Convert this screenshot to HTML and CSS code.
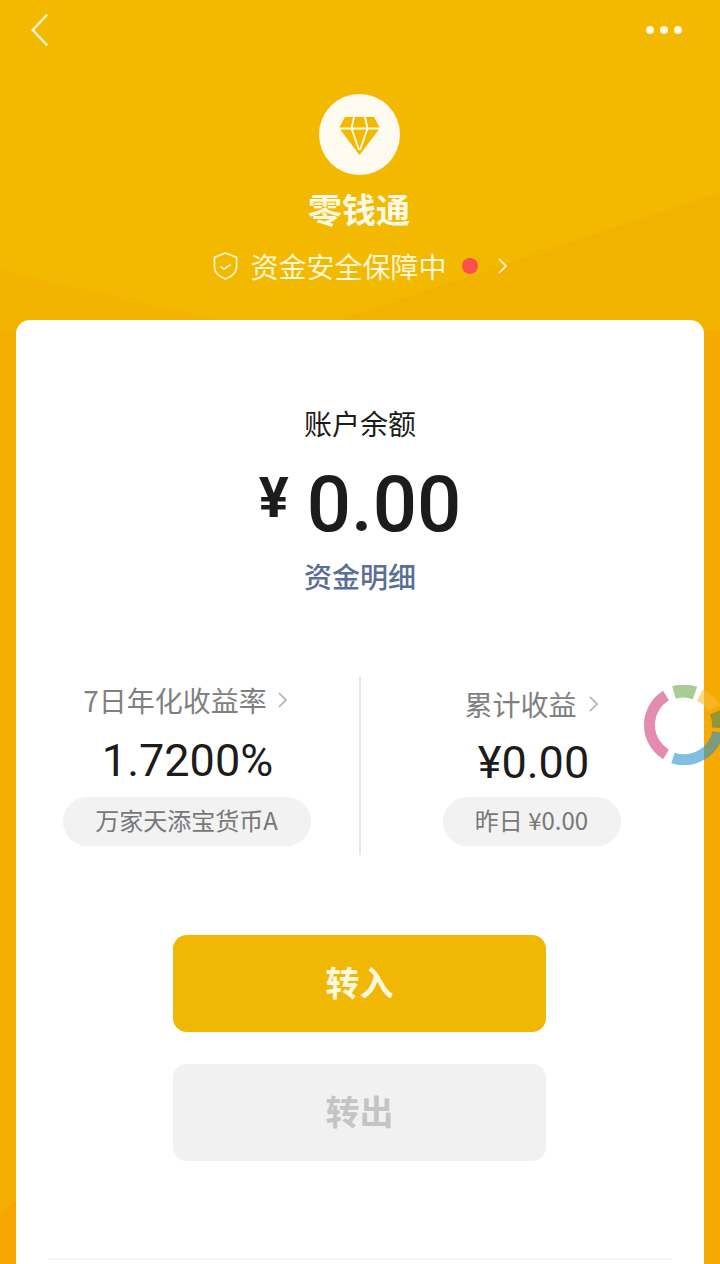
FILE: index.html
```html
<!DOCTYPE html>
<html lang="zh-CN">
<head>
  <meta charset="UTF-8" />
  <meta name="viewport" content="width=device-width,initial-scale=1.0" />
  <title>零钱通</title>
  <link rel="stylesheet" href="styles.css">
</head>
<body>
  <svg class="bg-shapes" viewBox="0 0 720 1264" aria-hidden="true">
    <polygon points="0,270 264,330 0,330" fill="#f2b400" />
    <polygon points="720,192 310,330 720,330" fill="#f1b300" />
    <polygon points="0,330 720,330 720,1264 0,1264" fill="#f3b000" />
    <polygon points="0,1215 16,1200 16,1264 0,1264" fill="#f7a600" />
    <polygon points="704,330 720,330 720,1264 704,1264" fill="#f6a900" />
  </svg>

  <div class="topbar">
    <svg class="back-icon" viewBox="0 0 22 38"><path d="M19 2 3 19l16 17" /></svg>
    <div class="more-dots"><i></i><i></i><i></i></div>
  </div>

  <header class="product">
    <div class="product-logo">
      <svg viewBox="0 0 41 38">
        <path class="gem" d="M6 0h29l6 11-20.500 27L0 11z" />
        <path class="gem-lines" d="M0 11.500h41M15 0l-2.500 11.500L20 33M26 0l2.500 11.500L21 33" />
      </svg>
    </div>
    <h1>零钱通</h1>
    <div class="safe-row">
      <svg class="shield" viewBox="0 0 26 30"><path d="M13 1.500 24.500 6v10c0 6-5 10-11.500 12.500C6.500 26 1.500 22 1.500 16V6z" /><path d="m7.500 15.500 4 2.500 7-4.500" /></svg>
      <span>资金安全保障中</span>
      <i class="red-dot"></i>
      <svg class="chev safe-chev" viewBox="0 0 12 20"><path d="m2 2 8 8-8 8" /></svg>
    </div>
  </header>

  <main class="card">
    <div class="balance-title">账户余额</div>
    <div class="balance"><span class="yen">¥</span>0.00</div>
    <a class="detail-link">资金明细</a>

    <section class="stats">
      <div class="stat">
        <div class="stat-label">7日年化收益率<svg class="chev" viewBox="0 0 12 20"><path d="m2 2 8 8-8 8" /></svg></div>
        <div class="stat-value">1.7200%</div>
        <div class="pill pill-wide">万家天添宝货币A</div>
      </div>
      <div class="stat stat-right">
        <div class="stat-label">累计收益<svg class="chev" viewBox="0 0 12 20"><path d="m2 2 8 8-8 8" /></svg></div>
        <div class="stat-value">¥0.00</div>
        <div class="pill pill-small">昨日 ¥0.00</div>
      </div>
    </section>

    <div class="actions">
      <button class="btn btn-in">转入</button>
      <button class="btn btn-out">转出</button>
    </div>
    <div class="bottom-line"></div>
  </main>

  <svg class="float-ring" viewBox="0 0 80 80" aria-hidden="true">
    <path class="ring-part" d="M23 10.500A34.600 34.600 0 0 0 23 69.500" stroke="#d2417b" />
    <path class="ring-part ring-thick" d="M31 7.500A34 34 0 0 1 52 8" stroke="#70ac4e" />
    <path class="ring-part ring-thick" d="M57 10A34 34 0 0 1 71 23" stroke="#f5c034" />
    <path class="ring-part ring-thick" d="M73 27A34.600 34.600 0 0 1 75.500 43" stroke="#4f8a5c" />
    <path class="ring-part" d="M30 73A34.800 34.800 0 0 0 75 47" stroke="#2a96d0" />
  </svg>
</body>
</html>
```

FILE: styles.css
```css
*{box-sizing:border-box;}
html,body{margin:0;height:1264px;overflow:hidden;}
body{
  position:relative;
  font-family:"Noto Sans CJK SC","Noto Sans",sans-serif;
  background:#f2b900;
  color:#1c1c1c;
}
.bg-shapes{position:absolute;left:0;top:0;width:720px;height:1264px;}

.topbar{
  position:relative;display:flex;justify-content:space-between;align-items:center;
  height:60px;padding:0 38px 0 30px;
}
.back-icon{width:20px;height:38px;fill:none;stroke:#fdf3cf;stroke-width:2.6;}
.more-dots{display:flex;gap:6px;}
.more-dots i{width:8px;height:8px;border-radius:50%;background:#fff8e6;}

.product{position:relative;display:flex;flex-direction:column;align-items:center;padding:34px 2px 0 0;height:260px;}
.product-logo{
  width:81px;height:81px;border-radius:50%;background:#fffbf0;
  display:flex;align-items:center;justify-content:center;
}
.product-logo svg{width:41px;height:38px;margin-top:3px;}
.gem{fill:#f2b900;}
.gem-lines{fill:none;stroke:#fffbf0;stroke-width:1.8;}
.product h1{margin:8px 0 0;font-size:34px;line-height:52px;font-weight:700;color:#fff9e8;}
.safe-row{display:flex;align-items:center;margin-top:11px;margin-left:3px;height:40px;font-size:28px;color:#fff6d8;}
.shield{width:25px;height:30px;margin-right:12px;fill:none;stroke:#fff3c8;stroke-width:1.8;}
.red-dot{width:16px;height:16px;border-radius:50%;background:#f9514f;margin:0 19px 0 15px;}
.chev{width:11px;height:18px;fill:none;stroke:#b9b9b9;stroke-width:2;}
.safe-chev{stroke:#fff3c8;}

.card{
  position:absolute;left:16px;top:320px;width:688px;height:960px;
  background:#fff;border-radius:14px;
  display:flex;flex-direction:column;align-items:center;
}
.balance-title{margin-top:83px;font-size:28px;line-height:40px;}
.balance{
  margin-top:17px;font-family:Roboto,sans-serif;font-weight:500;font-size:78px;line-height:90px;
  display:flex;align-items:center;
}
.yen{font-size:56px;font-weight:700;margin:-14px 18px 0 0;line-height:76px;}
.detail-link{margin-top:5px;font-size:28px;line-height:42px;font-weight:500;color:#5a6e96;}

.stats{
  width:100%;margin-top:80px;height:178px;padding-right:2px;
  display:grid;grid-template-columns:1fr 1fr;
}
.stat{display:flex;flex-direction:column;align-items:center;padding-top:3px;}
.stat-right{border-left:2px solid #e6e6e6;padding-top:7px;}
.stat-label{
  display:flex;align-items:center;gap:10px;margin-left:-4px;
  font-size:28px;line-height:40px;color:#808080;
}
.stat-right .stat-label{margin-left:0;gap:11px;}
.stat-value{margin-top:14px;font-family:Roboto,sans-serif;font-size:45px;line-height:54px;color:#1c1c1c;}
.stat-right .stat-value{margin:12px 0 0 4px;}
.pill{
  margin-top:9px;height:49px;border-radius:25px;background:#f2f2f2;padding-bottom:4px;
  display:flex;align-items:center;justify-content:center;
  font-size:24px;color:#787878;
}
.stat-right .pill{margin-top:7px;}
.pill-wide{width:248px;margin-left:-2px;}
.pill-small{width:178px;}

.actions{display:flex;flex-direction:column;gap:32px;margin-top:80px;margin-left:-1px;}
.btn{
  width:373px;height:97px;border:none;border-radius:14px;padding:0 0 4px;
  font-family:inherit;font-size:34px;font-weight:700;
}
.btn-in{background:#f0b705;color:#fff8e0;}
.btn-out{background:#f1f1f1;color:#c4c4c4;}
.bottom-line{width:624px;height:2px;background:#f5f5f5;margin-top:97px;}

.float-ring{position:absolute;left:643px;top:685px;width:80px;height:80px;opacity:.6;}
.ring-part{fill:none;stroke-width:11;}
.ring-thick{stroke-width:13;}
```
